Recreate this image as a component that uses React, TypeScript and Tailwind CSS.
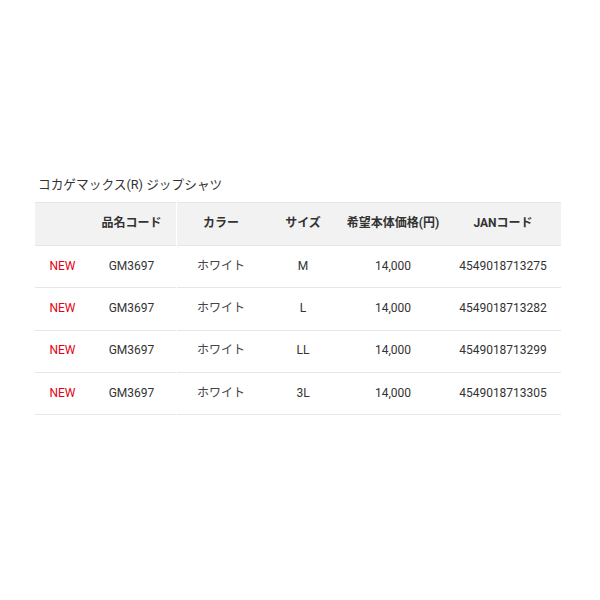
import React from 'react';

const rows = [
  { size: 'M', jan: '4549018713275' },
  { size: 'L', jan: '4549018713282' },
  { size: 'LL', jan: '4549018713299' },
  { size: '3L', jan: '4549018713305' },
];

const font = { fontFamily: 'Roboto, "Noto Sans CJK JP", sans-serif' };

export default function App() {
  return (
    <div className="w-[600px] h-[600px] bg-white text-[#333]" style={font}>
      <div className="pt-[177px] pl-[35px]">
        <h2 className="pl-[3px] text-[12.7px] leading-[16px] mb-[9px] font-normal">コカゲマックス(R) ジップシャツ</h2>
        <div className="w-[526px] text-[12px]">
          {/* header */}
          <div className="flex h-[44px] font-bold">
            <div className="w-[52px] bg-[#f2f2f2] border-y border-[#e6e6e6]"></div>
            <div className="w-[89px] bg-[#f2f2f2] border-y border-[#e6e6e6] pb-[2px] flex items-center justify-center">品名コード</div>
            <div className="w-px"></div>
            <div className="w-[88px] bg-[#f2f2f2] border-y border-[#e6e6e6] pb-[2px] flex items-center justify-center">カラー</div>
            <div className="w-[76px] bg-[#f2f2f2] border-y border-[#e6e6e6] pb-[2px] flex items-center justify-center">サイズ</div>
            <div className="w-[104px] bg-[#f2f2f2] border-y border-[#e6e6e6] pb-[2px] flex items-center justify-center">希望本体価格(円)</div>
            <div className="w-[116px] bg-[#f2f2f2] border-y border-[#e6e6e6] pb-[2px] flex items-center justify-center">JANコード</div>
          </div>
          {rows.map((r) => (
            <div key={r.jan} className="flex h-[42.3px]">
              <div className="w-[52px] border-b border-[#e6e6e6] pb-[2px] pl-[3px] flex items-center justify-center text-[#e60012]">NEW</div>
              <div className="w-[89px] border-b border-[#e6e6e6] pb-[2px] flex items-center justify-center">GM3697</div>
              <div className="w-px"></div>
              <div className="w-[88px] border-b border-[#e6e6e6] pb-[2px] flex items-center justify-center text-[#444]">ホワイト</div>
              <div className="w-[76px] border-b border-[#e6e6e6] pb-[2px] flex items-center justify-center">{r.size}</div>
              <div className="w-[104px] border-b border-[#e6e6e6] pb-[2px] flex items-center justify-center">14,000</div>
              <div className="w-[116px] border-b border-[#e6e6e6] pb-[2px] flex items-center justify-center">{r.jan}</div>
            </div>
          ))}
        </div>
      </div>
    </div>
  );
}
